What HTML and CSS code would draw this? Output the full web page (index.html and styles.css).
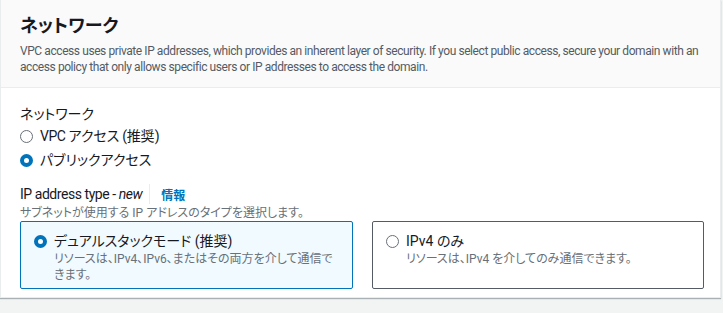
FILE: index.html
```html
<!DOCTYPE html>
<html lang="ja">
<head>
<meta charset="utf-8">
<link rel="stylesheet" href="styles.css">
</head>
<body>
<div class="panel">
  <div class="panel-header">
    <h2 class="title">ネットワーク</h2>
    <p class="header-desc">VPC access uses private IP addresses, which provides an inherent layer of security. If you select public access, secure your domain with an access policy that only allows specific users or IP addresses to access the domain.</p>
  </div>
  <div class="panel-body">
    <div class="field">
      <div class="label">ネットワーク</div>
      <div class="radio-group">
        <label class="radio-row"><span class="radio"></span><span class="radio-text mixed"><span class="latin">VPC</span> アクセス <span class="latin">(</span>推奨<span class="latin">)</span></span></label>
        <label class="radio-row"><span class="radio checked"></span><span class="radio-text">パブリックアクセス</span></label>
      </div>
    </div>
    <div class="field field-ip">
      <div class="label-row"><span class="label latin">IP address type - <i>new</i></span><span class="divider"></span><a class="info">情報</a></div>
      <div class="field-desc">サブネットが使用する IP アドレスのタイプを選択します。</div>
      <div class="tiles">
        <div class="tile selected">
          <span class="radio checked"></span>
          <div class="tile-text">
            <div class="tile-title">デュアルスタックモード (推奨)</div>
            <div class="tile-desc">リソースは、IPv4、IPv6、またはその両方を介して通信できます。</div>
          </div>
        </div>
        <div class="tile">
          <span class="radio"></span>
          <div class="tile-text">
            <div class="tile-title">IPv4 のみ</div>
            <div class="tile-desc">リソースは、IPv4 を介してのみ通信できます。</div>
          </div>
        </div>
      </div>
    </div>
  </div>
</div>
</body>
</html>
```
FILE: styles.css
```css
* { box-sizing: border-box; }
html, body { margin: 0; padding: 0; }
body {
  background: #f2f3f3;
  font-family: Roboto, "Noto Sans CJK JP", sans-serif;
  font-feature-settings: "palt";
  color: #16191f;
  width: 723px;
  height: 313px;
  overflow: hidden;
}
.latin { letter-spacing: -0.45px; }
.mixed { word-spacing: -0.5px; }
.panel {
  width: 721px;
  height: 298px;
  background: #fff;
  border: 1px solid #eaeded;
  border-top: none;
  box-shadow: 0 1px 1px rgba(0, 28, 36, 0.3);
}
.panel-header {
  background: #fafafa;
  border-bottom: 1px solid #eaeded;
  height: 88px;
  padding: 14px 14px 0 19px;
}
.title {
  margin: 0;
  font-size: 18px;
  font-weight: 700;
  line-height: 24px;
}
.header-desc {
  margin: 5px 0 0;
  font-size: 12px;
  line-height: 16px;
  letter-spacing: -0.42px;
  color: #545b64;
}
.panel-body {
  padding: 15px 19px 0;
}
.label {
  font-size: 14px;
  line-height: 22px;
}
.radio-group {
  display: flex;
  flex-direction: column;
  gap: 2px;
}
.radio-row {
  display: flex;
  align-items: center;
  gap: 7px;
  font-size: 14px;
  line-height: 22px;
}
.radio {
  flex: none;
  width: 13px;
  height: 13px;
  border-radius: 50%;
  border: 1.5px solid #687078;
  background: #fff;
}
.radio.checked {
  border: 4px solid #0073bb;
}
.field-ip { margin-top: 12px; }
.label-row {
  display: flex;
  align-items: center;
}
.label i { font-style: italic; }
.divider {
  width: 1px;
  height: 20px;
  background: #eaeded;
  margin: 0 11px 0 7px;
}
.info {
  font-size: 12px;
  font-weight: 700;
  color: #0073bb;
}
.field-desc {
  font-size: 12px;
  line-height: 16px;
  color: #687078;
}
.tiles {
  display: grid;
  grid-template-columns: 333px 332px;
  gap: 19px;
  margin-top: 0;
}
.tile {
  display: flex;
  align-items: flex-start;
  gap: 7px;
  height: 68px;
  border: 1px solid #545b64;
  border-radius: 2px;
  padding: 9px 14px 9px 13px;
}
.tile .radio { margin-top: 4px; }
.tile.selected {
  background: #f1faff;
  border-color: #0073bb;
}
.tile-title {
  font-size: 14px;
  line-height: 20px;
}
.tile-desc {
  font-size: 12px;
  line-height: 16px;
  color: #687078;
}
```
